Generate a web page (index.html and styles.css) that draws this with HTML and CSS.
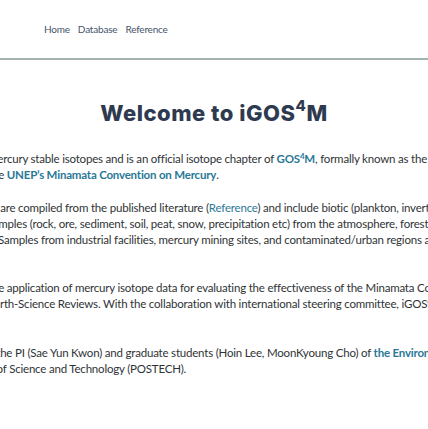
FILE: index.html
```html
<!DOCTYPE html>
<html lang="en">
<head>
<meta charset="utf-8">
<title>iGOS4M</title>
<link rel="stylesheet" href="styles.css">
</head>
<body>
<header class="topbar">
  <nav class="nav">
    <a href="#">Home</a>
    <a href="#">Database</a>
    <a href="#">Reference</a>
  </nav>
</header>
<main class="page">
  <h1 class="title">Welcome to iGOS<sup>4</sup>M</h1>
  <div class="body-wrap">
    <div class="body">
      <p class="p1"><span class="lead">me</span>rcury stable isotopes and is an official isotope chapter of <a class="link strong" href="#">GOS<sup>4</sup>M</a>, formally known as the Global Observation System for Mercury, a flagship of<br><span class="lead">th</span>e <a class="link strong" href="#">UNEP’s Minamata Convention on Mercury</a>.</p>
      <p class="p2"><span class="lead">ta</span> are compiled from the published literature (<a class="link" href="#">Reference</a>) and include biotic (plankton, invertebrates, fish, birds and mammals)<br><span class="lead">sa</span>mples (rock, ore, sediment, soil, peat, snow, precipitation etc) from the atmosphere, forests, oceans and freshwaters.<br><span class="lead">s.</span> Samples from industrial facilities, mercury mining sites, and contaminated/urban regions are also included.</p>
      <p class="p3"><span class="lead">th</span>e application of mercury isotope data for evaluating the effectiveness of the Minamata Convention was reviewed in<br><span class="lead">Ea</span>rth-Science Reviews. With the collaboration with international steering committee, iGOS<sup>4</sup>M is updated regularly.</p>
      <p class="p4"><span class="lead">y t</span>he PI (Sae Yun Kwon) and graduate students (Hoin Lee, MoonKyoung Cho) of <a class="link strong" href="#">the Environmental Science and Engineering</a><br><span class="lead">e o</span>f Science and Technology (POSTECH).</p>
    </div>
  </div>
</main>
</body>
</html>
```
FILE: styles.css
```css
html, body {
  margin: 0;
  padding: 0;
  background: #ffffff;
  overflow: hidden;
}
body {
  font-family: Lato, "Liberation Sans", sans-serif;
  color: #2f3336;
}
.topbar {
  height: 58px;
  border-bottom: 2px solid #a3b3ae;
  display: flex;
  align-items: center;
}
.nav {
  display: flex;
  gap: 8px;
  padding-left: 44px;
}
.nav a {
  font-size: 10px;
  letter-spacing: -0.2px;
  color: #45536a;
  text-decoration: none;
}
.page {
  display: flex;
  flex-direction: column;
  align-items: center;
}
.title {
  margin: 38px 0 0;
  font-family: Inter, "Open Sans", sans-serif;
  font-weight: 800;
  font-size: 22px;
  line-height: 30px;
  color: #2e3a4f;
  letter-spacing: 0.5px;
}
.title sup {
  font-size: 15px;
  line-height: 0;
  vertical-align: 10px;
}
.body-wrap {
  align-self: stretch;
  margin-top: 23px;
}
.body {
  white-space: nowrap;
  font-size: 11.5px;
  letter-spacing: -0.2px;
  line-height: 16px;
  margin-left: -12px;
}
.body p { margin: 0; }
.p2 { margin-top: 17px !important; }
.p3 { margin-top: 32px !important; }
.p4 { margin-top: 33px !important; }
.link {
  color: #2a7896;
  text-decoration: none;
}
.strong { font-weight: 700; }
.body sup {
  font-size: 8px;
  line-height: 0;
  vertical-align: 4px;
}
```
